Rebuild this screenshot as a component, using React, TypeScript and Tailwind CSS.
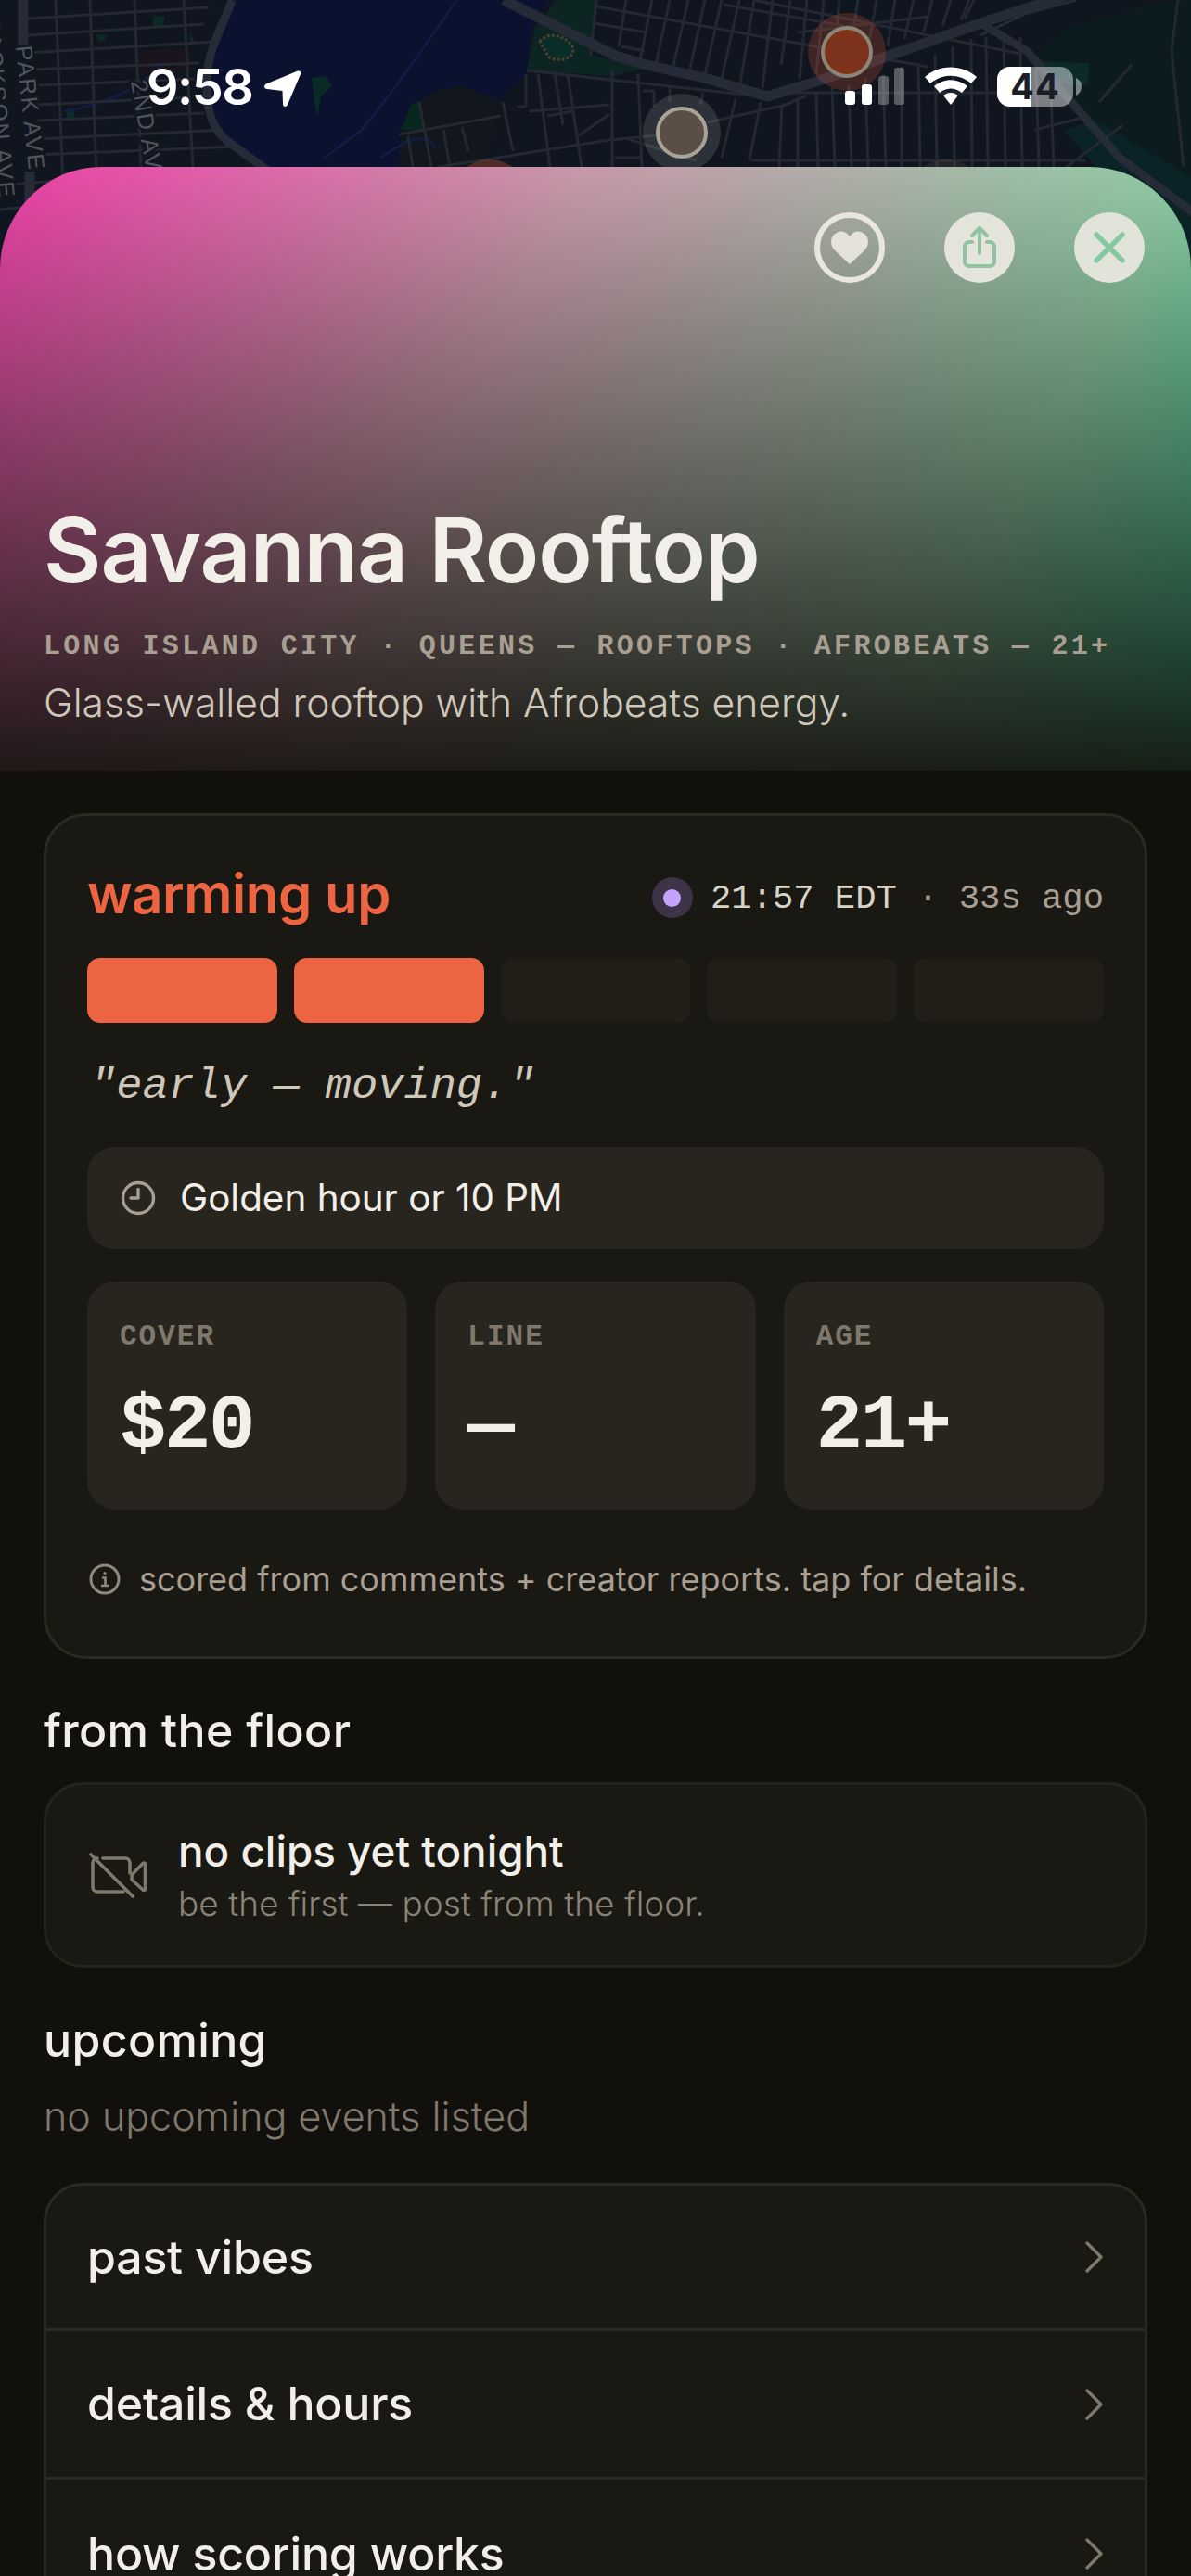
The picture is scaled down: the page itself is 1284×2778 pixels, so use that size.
import React from "react";

const sans = "font-['Inter','Liberation_Sans',sans-serif]";
const mono = "font-['Liberation_Mono',monospace]";

const thin: number[][] = [
  // left grid
  [60, 0, 72, 300], [97, 0, 108, 300], [145, 0, 152, 180], [198, 0, 208, 180],
  [30, 20, 225, 8], [30, 38, 220, 26], [30, 57, 230, 45], [30, 75, 215, 68], [40, 92, 210, 85], [40, 113, 205, 105], [40, 130, 220, 122],
  [40, 150, 240, 140], [40, 167, 258, 158], [0, 200, 60, 195], [0, 226, 40, 222],
  // park & above highway
  [643, 0, 637, 60], [675, 0, 667, 50], [703, 0, 690, 65], [722, 0, 707, 70], [742, 0, 725, 75], [760, 0, 743, 78], [778, 0, 760, 80],
  [797, 0, 778, 85], [813, 0, 798, 90], [833, 0, 822, 95], [852, 0, 842, 70], [870, 0, 862, 85], [888, 0, 880, 80], [905, 0, 898, 72],
  [925, 0, 915, 65], [945, 0, 935, 55], [965, 0, 957, 50], [985, 0, 975, 42], [1005, 0, 996, 34], [1025, 0, 1016, 28], [1045, 0, 1036, 22],
  [643, 7, 1000, 72], [640, 25, 697, 35], [813, 0, 1100, 58], [670, 50, 695, 55], [860, 35, 1000, 18], [780, 5, 910, 28],
  // below highway west
  [568, 76, 830, 105], [660, 75, 660, 180], [688, 80, 692, 180], [580, 80, 593, 180], [598, 80, 607, 135], [612, 80, 627, 180],
  [570, 120, 657, 113], [590, 125, 617, 120], [623, 147, 657, 123], [430, 145, 540, 125], [542, 110, 553, 163], [452, 110, 465, 180],
  [440, 147, 445, 180], [478, 140, 485, 180], [498, 137, 505, 163], [473, 180, 650, 152], [650, 152, 735, 143], [763, 132, 847, 113], [847, 113, 870, 103],
  [677, 150, 750, 173], [663, 170, 692, 170], [793, 107, 778, 170], [820, 110, 808, 173], [722, 92, 722, 110], [758, 100, 755, 113],
  [693, 98, 705, 98], [705, 98, 705, 115], [567, 80, 567, 115], [567, 115, 558, 115],
  // below highway east
  [843, 113, 840, 180], [860, 105, 860, 180], [880, 98, 882, 180], [897, 95, 900, 180], [915, 92, 918, 180], [933, 85, 936, 180], [952, 80, 955, 180],
  [972, 72, 972, 180], [990, 68, 992, 180], [1008, 60, 1010, 180], [1027, 50, 1029, 180], [1047, 42, 1048, 180], [1063, 40, 1065, 180], [1082, 38, 1084, 180],
  [1100, 40, 1102, 180], [1117, 75, 1120, 180], [1133, 100, 1136, 180], [840, 100, 1120, 100], [810, 173, 1170, 173], [1115, 140, 1175, 125], [1185, 110, 1220, 70],
  [1150, 180, 1210, 135], [1050, 0, 1040, 20], [1270, 0, 1263, 55], [1263, 55, 1276, 180],
];

function MapBackdrop() {
  return (
    <svg className="absolute left-0 top-0 h-[320px] w-[1284px]" viewBox="0 0 1284 320" fill="none">
      <rect width="1284" height="320" fill="#10161f" />
      <path d="M1117 62 L1150 30 L1240 5 L1284 0 V320 H1284 L1200 160 L1150 110 Z" fill="#0b1b20" />
      <path d="M1147 140 L1180 130 L1284 190 V320 H1240 L1190 190 Z" fill="#0a2326" />
      <path d="M577 30 L600 0 L645 0 L637 60 L700 72 L660 82 L568 76 Z" fill="#0c2522" />
      <path d="M1117 66 L1175 68 L1172 92 L1125 90 Z" fill="#0c2a2a" />
      <path d="M150 55 L205 52 L205 75 L152 80 Z" fill="#1a141d" />
      <path d="M254 0 H590 L573 30 L567 80 L537 107 L497 93 L473 97 L443 113 L432 140 L430 180 H285 L240 150 L218 115 L228 60 Z" fill="#0a1230" />
      <path d="M432 140 L443 113 L473 97 L497 93 L537 107 L530 150 L520 180 H430 Z" fill="#12171e" />
      <path d="M432 140 L443 113 L452 108 L458 140 Z" fill="#06281f" />
      <path d="M165 17 L178 18 L176 28 L165 28 Z M105 37 L115 38 L112 44 L105 43 Z M205 35 L210 45 L205 46 Z M72 118 L80 118 L80 128 L72 128 Z" fill="#0c2a27" />
      <path d="M336 84 L350 82 L358 92 L346 104 L342 126 L338 104 Z" fill="#0a2a26" />
      <path d="M0 130 C60 120 90 95 105 80 M430 0 C400 40 370 90 320 150 L280 180 M340 180 C370 160 390 150 400 170" stroke="#111d46" strokeWidth="2.5" transform="translate(70 -10)" />
      <path d="M582 45 C590 33 610 38 617 50 C622 62 605 68 592 62 Z" fill="#0a2e27" stroke="#4c3f2e" strokeWidth="3" strokeDasharray="3 2" />
      <g stroke="#232833" strokeWidth="3">
        {thin.map((l, i) => (
          <line key={i} x1={l[0]} y1={l[1]} x2={l[2]} y2={l[3]} />
        ))}
      </g>
      <g stroke="#262b38" strokeLinejoin="round">
        <path d="M250 0 C240 30 222 55 223 90 C222 120 230 140 245 152 L290 185" strokeWidth="9" />
        <path d="M543 0 L663 60 L697 70 L763 85 L827 104 L880 88 L1057 25 L1150 -5" strokeWidth="11" />
        <path d="M1057 25 L1107 55 L1207 170 L1290 232" strokeWidth="9" />
        <path d="M25 0 V48 M32 185 V300" strokeWidth="11" />
        <path d="M1160 0 L1105 15 L1057 38" strokeWidth="3" />
      </g>
      <g fontFamily="'Liberation Sans',sans-serif" fontSize="25" fill="#4f5460" stroke="#12161e" strokeWidth="5" paintOrder="stroke" letterSpacing="2">
        <text transform="translate(17 50) rotate(84)">PARK AVE</text>
        <text transform="translate(141 88) rotate(80)">2ND AV</text>
        <text transform="translate(-18 22) rotate(85)">JACKSON AVE</text>
      </g>
      <circle cx="528" cy="214" r="42" fill="#e8603c" fillOpacity=".3" />
      <circle cx="1020" cy="214" r="42" fill="#ddb48c" fillOpacity=".1" />
      <circle cx="913" cy="56" r="42" fill="#e8603c" fillOpacity=".22" />
      <circle cx="913" cy="56" r="26" fill="#7d321c" stroke="#8b8678" strokeWidth="4" />
      <circle cx="735" cy="143" r="42" fill="#ffffff" fillOpacity=".12" />
      <circle cx="735" cy="143" r="26" fill="#5a4e47" stroke="#a9a397" strokeWidth="4" />
    </svg>
  );
}

function StatusBar() {
  return (
    <>
      <div className={`absolute left-[158px] top-[64px] text-[54px] leading-[60px] font-semibold tracking-[-1.5px] text-white ${sans}`}>9:58</div>
      <svg className="absolute left-[284px] top-[75px]" width="42" height="41" viewBox="0 0 42 41">
        <path d="M37 1.5 C39.5 1 41 3 40 5 L26 38 C24.5 41 21 40.5 21 37 L20.5 23 L4 21 C0.5 20.5 0 17 3 15.5 Z" fill="#fff" />
      </svg>
      <svg className="absolute left-[910px] top-[72px]" width="260" height="44" viewBox="0 0 260 44">
        <rect x="1" y="26" width="11" height="15" rx="3" fill="#fff" />
        <rect x="19" y="19" width="11" height="22" rx="3" fill="#fff" />
        <rect x="37" y="10" width="11" height="31" rx="3" fill="#fff" fillOpacity=".3" />
        <rect x="54" y="1" width="11" height="40" rx="3" fill="#fff" fillOpacity=".3" />
        <path d="M87 11 C103 -3 127 -3 143 11 L137 18 C124 7 106 7 93 18 Z M97 21 C108 12 122 12 133 21 L127 28 C119 22 111 22 103 28 Z M107 31 C112 27 118 27 123 31 L115 41 Z" fill="#fff" />
        <rect x="165" y="0" width="82" height="43" rx="14" fill="#fff" fillOpacity=".45" />
        <path d="M179 0 H202 V43 H179 A14 14 0 0 1 165 29 V14 A14 14 0 0 1 179 0 Z" fill="#fff" />
        <path d="M250 12 C254 14 256 17 256 21 C256 25 254 29 250 31 Z" fill="#fff" fillOpacity=".45" />
      </svg>
      <div className={`absolute left-[1075px] top-[72px] flex h-[43px] w-[82px] items-center justify-center text-[38px] font-bold tracking-[1px] text-[#1a1e29] ${sans}`}>44</div>
    </>
  );
}

function InfoIcon() {
  return (
    <svg width="34" height="34" viewBox="0 0 34 34" fill="none" stroke="#8f887c" className="shrink-0">
      <circle cx="17" cy="17" r="15" strokeWidth="3" />
      <path d="M14 15.5h3.5v8M13 24h9" strokeWidth="2.6" />
      <circle cx="17" cy="10.5" r="1.6" fill="#8f887c" stroke="none" />
    </svg>
  );
}

function ClockIcon() {
  return (
    <svg width="38" height="38" viewBox="0 0 38 38" fill="none" stroke="#a89f92" strokeWidth="3.4" strokeLinecap="round" strokeLinejoin="round" className="shrink-0">
      <circle cx="19" cy="19" r="16.5" />
      <path d="M19 9.5V19h-8" />
    </svg>
  );
}

function VideoOffIcon() {
  return (
    <svg width="64" height="52" viewBox="0 0 64 52" fill="none" stroke="#7f786c" strokeWidth="3.6" strokeLinecap="round" strokeLinejoin="round" className="shrink-0">
      <path d="M15 8H39a5 5 0 0 1 5 5v11" />
      <path d="M8 8H9a5 5 0 0 0-5 5v26a5 5 0 0 0 5 5H37" />
      <path d="M46 26 L58 13.5 a1.5 1.5 0 0 1 2.5 1 V41 a1.5 1.5 0 0 1-2.5 1 L46 31 Z" />
      <path d="M2 4 L47 49" />
    </svg>
  );
}

function Chevron() {
  return (
    <svg width="20" height="34" viewBox="0 0 20 34" fill="none" stroke="#7f786c" strokeWidth="3.4" strokeLinecap="round" strokeLinejoin="round" className="shrink-0">
      <path d="M2 2 L17 17 L2 32" />
    </svg>
  );
}

function Stat({ label, value }: { label: string; value: string }) {
  return (
    <div className="flex h-[246px] flex-col rounded-[30px] bg-[#28251f] px-[35px] pt-[42px]">
      <div className={`text-[31px] leading-[36px] font-bold tracking-[2px] text-[#7f786c] ${mono}`}>{label}</div>
      <div className={`mt-[33px] text-[84px] leading-[92px] font-bold tracking-[-2.4px] text-[#f2efe9] ${mono}`}>{value}</div>
    </div>
  );
}

function Row({ label, first, last }: { label: string; first?: boolean; last?: boolean }) {
  return (
    <div className={`flex shrink-0 items-center justify-between px-[44px] ${first ? "h-[157px]" : "h-[160px]"} ${last ? "" : "border-b-[3px] border-[#2c2920]"}`}>
      <span className={`text-[50px] font-medium tracking-[-0.2px] text-[#f2efe9] ${sans}`}>{label}</span>
      <Chevron />
    </div>
  );
}

export default function App() {
  return (
    <div className={`relative h-[2778px] w-[1284px] overflow-hidden bg-[#12100c] ${sans}`}>
      <MapBackdrop />
      <StatusBar />

      <div className="relative pt-[180px]">
        <header className="flex h-[651px] flex-col justify-between rounded-t-[110px] bg-[linear-gradient(180deg,rgba(18,16,12,0)_0%,rgba(18,16,12,0.93)_100%),linear-gradient(118deg,#ee40a8_0%,#c79aaa_39%,#8fcda5_79%,#3ce1a0_100%)] px-[47px] pb-[47px] pt-[49px]">
          <div className="flex justify-end gap-[64px] pr-[3px]">
            <button className="flex h-[76px] w-[76px] items-center justify-center rounded-full border-[6px] border-[#e8e6de]">
              <svg width="42" height="38" viewBox="0 0 42 38">
                <path d="M21 37 L5 22 C-1 16 0 6 7 3 C12 0 18 2 21 7 C24 2 30 0 35 3 C42 6 43 16 37 22 Z" fill="#e4e2da" />
              </svg>
            </button>
            <button className="flex h-[76px] w-[76px] items-center justify-center rounded-full bg-[#e4e4da]">
              <svg width="38" height="46" viewBox="0 0 38 46" fill="none" stroke="#8fc4a0" strokeWidth="4" strokeLinecap="round" strokeLinejoin="round">
                <path d="M11 17 H8 a5 5 0 0 0-5 5 V38 a5 5 0 0 0 5 5 H30 a5 5 0 0 0 5-5 V22 a5 5 0 0 0-5-5 H27" />
                <path d="M19 29 V3 M11 10 L19 2 L27 10" />
              </svg>
            </button>
            <button className="flex h-[76px] w-[76px] items-center justify-center rounded-full bg-[#e2e4da]">
              <svg width="34" height="34" viewBox="0 0 34 34" fill="none" stroke="#86c8a0" strokeWidth="5.5" strokeLinecap="round">
                <path d="M3 3 L31 31 M31 3 L3 31" />
              </svg>
            </button>
          </div>
          <div>
            <h1 className="text-[96px] leading-[100px] font-semibold tracking-[-1px] text-[#f2efe9]">Savanna Rooftop</h1>
            <div className={`mt-[36px] text-[30px] leading-[36px] font-bold tracking-[3.3px] whitespace-nowrap text-[#a89f92] ${mono}`}>LONG ISLAND CITY · QUEENS — ROOFTOPS · AFROBEATS — 21+</div>
            <p className="mt-[17px] text-[42.6px] leading-[52px] font-light text-[#cfc8ba]">Glass-walled rooftop with Afrobeats energy.</p>
          </div>
        </header>

        <main className="flex flex-col px-[47px] pt-[46px]">
          <section className="flex flex-col rounded-[46px] border-[3px] border-[#2c2920] bg-[#1a1812] px-[44px] pb-[63px] pt-[52px]">
            <div className="flex h-[72px] items-center justify-between">
              <span className="mb-[8px] text-[58px] leading-[72px] font-semibold tracking-[-0.4px] text-[#ec6442]">warming up</span>
              <div className="flex items-center gap-[19px]">
                <span className="flex h-[44px] w-[44px] items-center justify-center rounded-full bg-[#3d3246]">
                  <span className="h-[19px] w-[19px] rounded-full bg-[#c4a3ff]" />
                </span>
                <span className={`mt-[2px] text-[37.2px] leading-[44px] whitespace-nowrap text-[#a89f92] ${mono}`}>
                  <span className="text-[#d8d4c8]">21:57 EDT</span> · 33s ago
                </span>
              </div>
            </div>

            <div className="mt-[29px] grid grid-cols-5 gap-[18px]">
              <div className="h-[70px] rounded-[14px] bg-[#ec6442]" />
              <div className="h-[70px] rounded-[14px] bg-[#ec6442]" />
              <div className="h-[70px] rounded-[14px] bg-[#211d17]" />
              <div className="h-[70px] rounded-[14px] bg-[#211d17]" />
              <div className="h-[70px] rounded-[14px] bg-[#211d17]" />
            </div>

            <p className={`mt-[41px] pl-[3px] text-[47px] leading-[56px] italic text-[#cfc8ba] ${mono}`}>"early — moving."</p>

            <div className="mt-[37px] flex h-[110px] items-center gap-[26px] rounded-[30px] bg-[#28251f] px-[36px]">
              <ClockIcon />
              <span className="text-[40.4px] leading-[52px] text-[#f2efe9]">Golden hour or 10 PM</span>
            </div>

            <div className="mt-[35px] grid grid-cols-3 gap-[30px]">
              <Stat label="COVER" value="$20" />
              <Stat label="LINE" value="—" />
              <Stat label="AGE" value="21+" />
            </div>

            <div className="mt-[55px] flex h-[40px] items-center gap-[20px] pl-[2px]">
              <InfoIcon />
              <span className="text-[36px] leading-[40px] whitespace-nowrap text-[#a89f92]">scored from comments + creator reports. tap for details.</span>
            </div>
          </section>

          <h2 className="mt-[47px] text-[50px] leading-[60px] font-medium tracking-[0.35px] text-[#f2efe9]">from the floor</h2>

          <section className="mt-[26px] flex h-[200px] items-center gap-[32px] rounded-[42px] border-[3px] border-[#26231c] bg-[#1a1812] px-[46px]">
            <VideoOffIcon />
            <div className="flex flex-col">
              <span className="text-[45.8px] leading-[56px] font-medium text-[#f2efe9]">no clips yet tonight</span>
              <span className="mt-[5px] text-[37px] leading-[46px] font-light text-[#8a8377]">be the first — post from the floor.</span>
            </div>
          </section>

          <h2 className="mt-[48px] text-[50px] leading-[60px] font-medium tracking-[0.35px] text-[#f2efe9]">upcoming</h2>
          <p className="mt-[26px] text-[43px] leading-[52px] font-light text-[#7f786c]">no upcoming events listed</p>

          <section className="mt-[46px] flex flex-col overflow-hidden rounded-[42px] border-[3px] border-[#2c2920] bg-[#1a1812]">
            <Row label="past vibes" first />
            <Row label="details & hours" />
            <Row label="how scoring works" last />
          </section>
        </main>
      </div>
    </div>
  );
}
